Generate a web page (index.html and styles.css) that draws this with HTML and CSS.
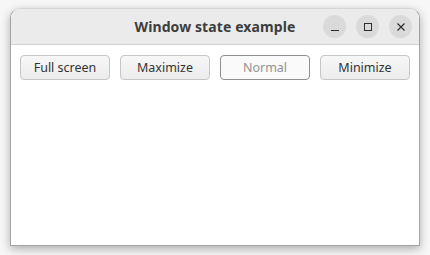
FILE: index.html
```html
<!DOCTYPE html>
<html>
<head>
<meta charset="utf-8">
<link rel="stylesheet" href="styles.css">
</head>
<body>
<div class="window">
  <div class="titlebar">
    <div class="title">Window state example</div>
    <div class="controls">
      <span class="ctl"><svg width="10" height="10" viewBox="0 0 10 10"><path d="M1 8.5H9" stroke="#2e2e2e" stroke-width="1"/></svg></span>
      <span class="ctl"><svg width="10" height="10" viewBox="0 0 10 10"><rect x="1.5" y="1.5" width="7" height="7" fill="none" stroke="#2e2e2e" stroke-width="1"/></svg></span>
      <span class="ctl"><svg width="10" height="10" viewBox="0 0 10 10"><path d="M1.5 1.5L8.5 8.5M8.5 1.5L1.5 8.5" stroke="#2e2e2e" stroke-width="1.2"/></svg></span>
    </div>
  </div>
  <div class="content">
    <button class="btn">Full screen</button>
    <button class="btn">Maximize</button>
    <button class="btn disabled">Normal</button>
    <button class="btn">Minimize</button>
  </div>
</div>
</body>
</html>
```
FILE: styles.css
```css
html, body { margin: 0; padding: 0; }
body {
  width: 430px;
  height: 255px;
  background: #f7f7f7;
  font-family: "Noto Sans", "DejaVu Sans", sans-serif;
  overflow: hidden;
}
.window {
  margin: 8px 10px 0 10px;
  width: 410px;
  height: 238px;
  box-sizing: border-box;
  border: 1px solid #a3a3a3;
  border-top-color: #d6d6d6;
  border-radius: 10px 10px 0 0;
  background: #ffffff;
  box-shadow: 0 3px 10px rgba(0,0,0,0.3);
  display: flex;
  flex-direction: column;
  overflow: hidden;
}
.titlebar {
  height: 35px;
  flex: none;
  background: #ebebeb;
  border-bottom: 1px solid #d2d2d2;
  position: relative;
  display: flex;
  align-items: center;
  justify-content: center;
}
.title {
  font-weight: bold;
  font-size: 14px;
  color: #3d3d3d;
  letter-spacing: 0.1px;
}
.controls {
  position: absolute;
  right: 7px;
  top: 6px;
  display: flex;
  gap: 10px;
}
.ctl {
  width: 23px;
  height: 23px;
  border-radius: 50%;
  background: #dadada;
  display: flex;
  align-items: center;
  justify-content: center;
}
.content {
  padding: 10px 9px;
  display: flex;
  gap: 10px;
  align-items: flex-start;
}
.btn {
  width: 90px;
  height: 25px;
  box-sizing: border-box;
  border: 1px solid #c6c6c6;
  border-radius: 4px;
  background: linear-gradient(#f7f7f7, #ececec);
  font-family: "Noto Sans", "DejaVu Sans", sans-serif;
  font-size: 12.5px;
  color: #333333;
  padding: 0;
  line-height: 22px;
}
.btn.disabled {
  background: #fafafa;
  border-color: #8f8f8f;
  color: #929292;
}
```
